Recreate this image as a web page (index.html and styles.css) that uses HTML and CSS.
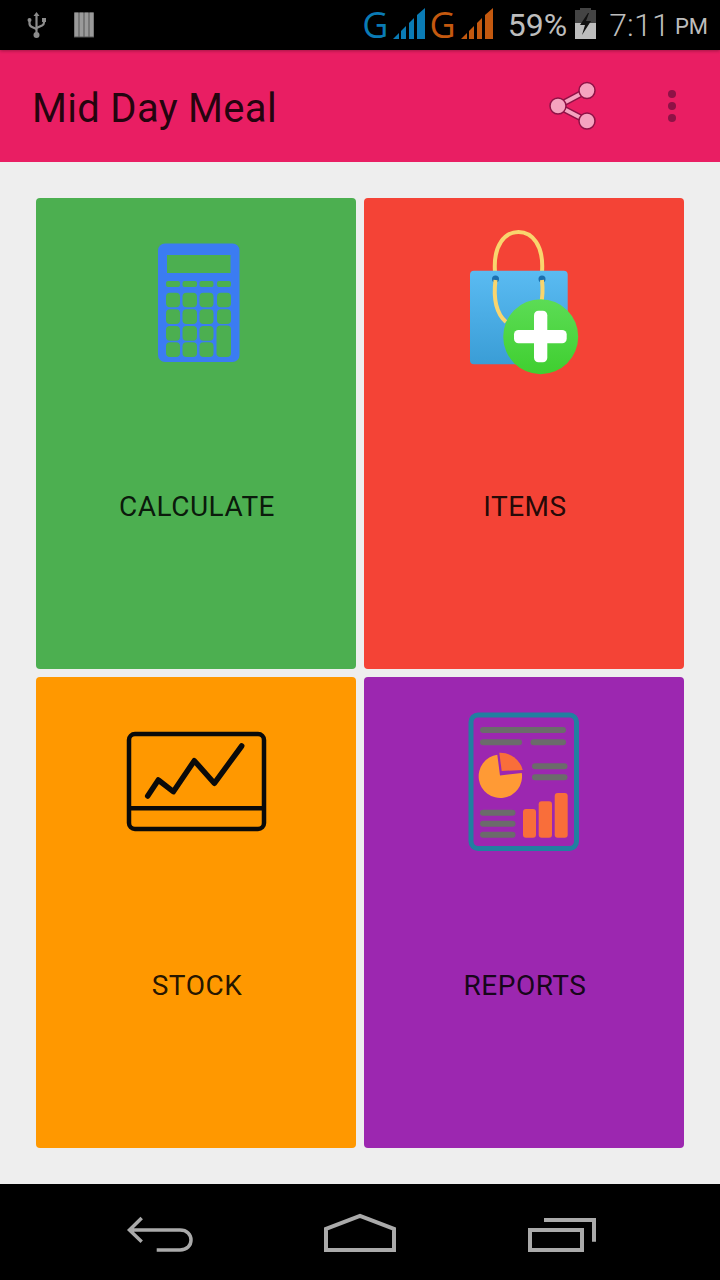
FILE: index.html
```html
<!DOCTYPE html>
<html lang="en">
<head>
<meta charset="utf-8">
<title>Mid Day Meal</title>
<link rel="stylesheet" href="styles.css">
</head>
<body>
<div class="screen">
  <header class="status">
    <div class="status-left">
      <svg class="usb" viewBox="26 10 22 30" width="22" height="30">
        <g fill="none" stroke="#8c8c8c" stroke-width="2.2">
          <path d="M36.500 15V34"/>
          <path d="M29.500 20V23.500Q29.500 26 32 27L36.500 29"/>
          <path d="M44 20V22.500Q44 24.500 42 25.500L36.500 28"/>
        </g>
        <g fill="#8c8c8c">
          <circle cx="36.500" cy="35" r="3"/>
          <path d="M36.500 12L39.500 16H33.500Z"/>
          <circle cx="29.500" cy="20" r="2"/>
          <rect x="42" y="18" width="4" height="4"/>
        </g>
      </svg>
      <svg class="sim" viewBox="74 12 20 26" width="20" height="26">
        <rect x="74" y="12.500" width="20" height="25" fill="#555"/>
        <g fill="#9a9a9a">
          <rect x="74.500" y="12.500" width="4" height="24"/>
          <rect x="79.500" y="12.500" width="4" height="24"/>
          <rect x="84.500" y="12.500" width="4" height="24"/>
          <rect x="89.500" y="12.500" width="4" height="24"/>
        </g>
      </svg>
    </div>
    <div class="status-right">
      <span class="net net-blue">G</span>
      <svg class="signal" viewBox="0 0 32 31" width="32" height="31">
        <g fill="#0a7bb5">
          <path d="M0 31L6 25V31Z"/>
          <path d="M8 23L13 18V31H8Z"/>
          <path d="M16 15L21 10V31H16Z"/>
          <path d="M24 7L32 0V31H24Z"/>
        </g>
      </svg>
      <span class="net net-orange">G</span>
      <svg class="signal" viewBox="0 0 32 31" width="32" height="31">
        <g fill="#c4590f">
          <path d="M0 31L6 25V31Z"/>
          <path d="M8 23L13 18V31H8Z"/>
          <path d="M16 15L21 10V31H16Z"/>
          <path d="M24 7L32 0V31H24Z"/>
        </g>
      </svg>
      <span class="battery-text">59%</span>
      <svg class="battery" viewBox="0 0 21 31" width="21" height="31">
        <path d="M5 0H16V2H21V15H0V2H5Z" fill="#444"/>
        <rect y="15" width="21" height="16" fill="#bdbdbd"/>
        <path d="M13 5L5 17H10L7 27L16 13H11L14 5Z" fill="#111"/>
      </svg>
      <span class="clock">7:11</span>
      <span class="ampm">PM</span>
    </div>
  </header>

  <div class="appbar">
    <h1 class="title">Mid Day Meal</h1>
    <svg class="share" viewBox="546 78 54 56" width="54" height="56">
      <path d="M587 90.500L558 106L587 121" fill="none" stroke="#8e1246" stroke-width="7"/>
      <path d="M587 90.500L558 106L587 121" fill="none" stroke="#f5a3bf" stroke-width="4"/>
      <g fill="#f5a3bf" stroke="#8e1246" stroke-width="1.500">
        <circle cx="587" cy="90.500" r="8"/>
        <circle cx="558" cy="106" r="8"/>
        <circle cx="587" cy="121" r="8"/>
      </g>
    </svg>
    <div class="overflow">
      <span class="dot"></span>
      <span class="dot"></span>
      <span class="dot"></span>
    </div>
  </div>

  <main class="main">
    <section class="card card-green">
      <svg class="icon" viewBox="116 222 160 160" width="160" height="160">
        <rect x="158" y="243.500" width="81.500" height="118.500" rx="7" fill="#3b7cf2"/>
        <g fill="#4caf50">
          <rect x="167" y="255" width="63.500" height="18"/>
          <rect x="166" y="281" width="14" height="6" rx="2"/>
          <rect x="182.500" y="281" width="14.500" height="6" rx="2"/>
          <rect x="199.500" y="281" width="14" height="6" rx="2"/>
          <rect x="217" y="281" width="14" height="6" rx="2"/>
          <rect x="166" y="292.700" width="14" height="14.600" rx="4"/>
          <rect x="182.500" y="292.700" width="14.500" height="14.600" rx="4"/>
          <rect x="199.500" y="292.700" width="14" height="14.600" rx="4"/>
          <rect x="217" y="292.700" width="14" height="14.600" rx="4"/>
          <rect x="166" y="309.300" width="14" height="14.700" rx="4"/>
          <rect x="182.500" y="309.300" width="14.500" height="14.700" rx="4"/>
          <rect x="199.500" y="309.300" width="14" height="14.700" rx="4"/>
          <rect x="217" y="309.300" width="14" height="14.700" rx="4"/>
          <rect x="166" y="326" width="14" height="14.700" rx="4"/>
          <rect x="182.500" y="326" width="14.500" height="14.700" rx="4"/>
          <rect x="199.500" y="326" width="14" height="14.700" rx="4"/>
          <rect x="216.500" y="325.500" width="14.500" height="31.500" rx="4"/>
          <rect x="166" y="342.300" width="14" height="14.700" rx="4"/>
          <rect x="182.500" y="342.300" width="14.500" height="14.700" rx="4"/>
          <rect x="199.500" y="342.300" width="14" height="14.700" rx="4"/>
        </g>
      </svg>
      <p class="label">CALCULATE</p>
    </section>

    <section class="card card-red">
      <svg class="icon" viewBox="444 222 160 160" width="160" height="160">
        <defs>
          <linearGradient id="bag" x1="0" y1="0" x2="0" y2="1">
            <stop offset="0" stop-color="#5abbf2"/>
            <stop offset="1" stop-color="#3a9dd6"/>
          </linearGradient>
          <linearGradient id="plus" x1="0" y1="0" x2="0" y2="1">
            <stop offset="0" stop-color="#5cdc55"/>
            <stop offset="1" stop-color="#3fcf30"/>
          </linearGradient>
        </defs>
        <path d="M495 272C493 245 505 232 518.500 232C532 232 544 245 542 272" fill="none" stroke="#f9d56e" stroke-width="4"/>
        <rect x="470" y="270.700" width="97.700" height="93.600" rx="4" fill="url(#bag)"/>
        <circle cx="495.500" cy="279" r="3.500" fill="#1b6fae"/>
        <circle cx="542" cy="279" r="3.500" fill="#1b6fae"/>
        <path d="M495.500 280C493 300 497 314 506 322" fill="none" stroke="#f9d56e" stroke-width="4"/>
        <path d="M542 280C543 290 543 296 541 304" fill="none" stroke="#f9d56e" stroke-width="4"/>
        <circle cx="540.700" cy="336.700" r="37.500" fill="url(#plus)"/>
        <rect x="514" y="330" width="52.700" height="13.300" rx="4.500" fill="#fff"/>
        <rect x="534" y="310.700" width="13.300" height="51.600" rx="4.500" fill="#fff"/>
      </svg>
      <p class="label">ITEMS</p>
    </section>

    <section class="card card-orange">
      <svg class="icon" viewBox="116 701 160 160" width="160" height="160">
        <g fill="none" stroke="#0a0a0a" stroke-width="4.500">
          <rect x="129" y="734" width="135" height="95" rx="6"/>
          <path d="M129 808.300H264"/>
        </g>
        <path d="M147.700 796L158.300 780L173.300 791.700L194.300 760.700L214.300 783.300L241.700 746" fill="none" stroke="#0a0a0a" stroke-width="5.500" stroke-linecap="round" stroke-linejoin="round"/>
      </svg>
      <p class="label">STOCK</p>
    </section>

    <section class="card card-purple">
      <svg class="icon" viewBox="444 701 160 160" width="160" height="160">
        <rect x="471" y="715" width="105.500" height="133.500" rx="7" fill="none" stroke="#217fa0" stroke-width="5"/>
        <g fill="#6b6b6b">
          <rect x="480" y="727" width="86" height="6" rx="3"/>
          <rect x="480" y="739.300" width="42" height="6" rx="3"/>
          <rect x="530.500" y="739.300" width="35.500" height="6" rx="3"/>
          <rect x="532" y="763.300" width="35.500" height="6" rx="3"/>
          <rect x="532" y="774.300" width="35.500" height="6" rx="3"/>
          <rect x="480" y="809.700" width="35.500" height="6" rx="3"/>
          <rect x="480" y="820.700" width="35.500" height="6" rx="3"/>
          <rect x="480" y="831.700" width="35.500" height="6" rx="3"/>
        </g>
        <path d="M497.300 754.800L500 775.500L521.800 773A21.700 21.700 0 1 1 497.300 754.800Z" fill="#ff9a35"/>
        <path d="M501.700 771L499.300 752.700A23 23 0 0 1 522.700 770Z" fill="#f96e3a"/>
        <g fill="#f96e3a">
          <rect x="523" y="809" width="13" height="28.700" rx="3"/>
          <rect x="538.700" y="801.300" width="13.300" height="36.400" rx="3"/>
          <rect x="554.700" y="793" width="13" height="44.700" rx="3"/>
        </g>
      </svg>
      <p class="label">REPORTS</p>
    </section>
  </main>

  <nav class="navbar">
    <svg class="nav-icon" viewBox="110 1184 100 96" width="100" height="96">
      <path d="M141.700 1218L129.500 1230L141.700 1241.700M129.500 1230H180C187 1230 191 1234.500 191 1240C191 1245.500 187 1250 180 1250H156.700" fill="none" stroke="#aaa" stroke-width="3.500"/>
    </svg>
    <svg class="nav-icon" viewBox="310 1184 100 96" width="100" height="96">
      <path d="M326 1250V1229L360 1216L394 1229V1250Z" fill="none" stroke="#aaa" stroke-width="4"/>
    </svg>
    <svg class="nav-icon" viewBox="510 1184 100 96" width="100" height="96">
      <g fill="none" stroke="#aaa" stroke-width="4">
        <rect x="530" y="1230" width="52" height="20"/>
        <path d="M544 1220H594V1241.700"/>
      </g>
    </svg>
  </nav>
</div>
</body>
</html>
```

FILE: styles.css
```css
* {
  box-sizing: border-box;
}

html,
body {
  margin: 0;
  padding: 0;
}

body {
  width: 720px;
  height: 1280px;
  overflow: hidden;
  font-family: Roboto, "Liberation Sans", sans-serif;
}

svg {
  display: block;
}

.screen {
  display: flex;
  flex-direction: column;
  width: 720px;
  height: 1280px;
  background: #eeeeee;
}

.status {
  position: relative;
  z-index: 1;
  display: flex;
  align-items: center;
  justify-content: space-between;
  height: 50px;
  flex: none;
  background: #000;
  box-shadow: 0 1px 3px rgba(0, 0, 0, 0.3);
}

.status-left {
  display: flex;
  align-items: center;
  gap: 26px;
  padding-left: 26px;
}

.status-right {
  display: flex;
  align-items: center;
  padding-right: 12px;
  color: #bdbdbd;
}

.signal,
.battery {
  margin-bottom: 3px;
}

.net {
  font-size: 36px;
  line-height: 50px;
  font-family: "Open Sans", Roboto, sans-serif;
}

.net-blue {
  color: #0a7bb5;
  margin-right: 4px;
}

.net-orange {
  color: #c4590f;
  margin-left: 5px;
  margin-right: 5px;
}

.battery-text {
  font-size: 32px;
  line-height: 50px;
  margin-left: 15px;
  margin-right: 8px;
}

.clock {
  font-size: 32px;
  font-weight: 300;
  line-height: 50px;
  margin-left: 13px;
  letter-spacing: 0.2px;
}

.ampm {
  font-size: 22px;
  line-height: 50px;
  margin-left: 5px;
  padding-top: 4px;
}

.appbar {
  display: flex;
  align-items: center;
  height: 112px;
  flex: none;
  padding-left: 32px;
  background: #e91e63;
}

.title {
  flex: 1;
  margin: 0;
  padding-top: 6px;
  font-size: 40px;
  font-weight: 400;
  letter-spacing: 0.3px;
  color: rgba(0, 0, 0, 0.87);
  line-height: 48px;
}

.share {
  margin-right: 68px;
}

.overflow {
  display: flex;
  flex-direction: column;
  gap: 4px;
  margin-right: 44px;
}

.dot {
  display: block;
  width: 8px;
  height: 8px;
  border-radius: 50%;
  background: #8e1246;
}

.main {
  flex: 1;
  display: grid;
  grid-template-columns: 320px 320px;
  grid-template-rows: 471px 471px;
  gap: 8px;
  padding: 36px;
}

.card {
  display: flex;
  flex-direction: column;
  align-items: center;
  padding-top: 24px;
  border-radius: 4px;
}

.card-green {
  background: #4caf50;
}

.card-red {
  background: #f44336;
}

.card-orange {
  background: #ff9800;
}

.card-purple {
  background: #9c27b0;
}

.label {
  margin: 105px 0 0;
  padding-left: 2px;
  font-size: 28px;
  letter-spacing: 0.5px;
  line-height: 40px;
  color: rgba(0, 0, 0, 0.87);
}

.navbar {
  display: grid;
  grid-template-columns: repeat(3, 200px);
  justify-content: center;
  justify-items: center;
  height: 96px;
  flex: none;
  background: #000;
}
```
